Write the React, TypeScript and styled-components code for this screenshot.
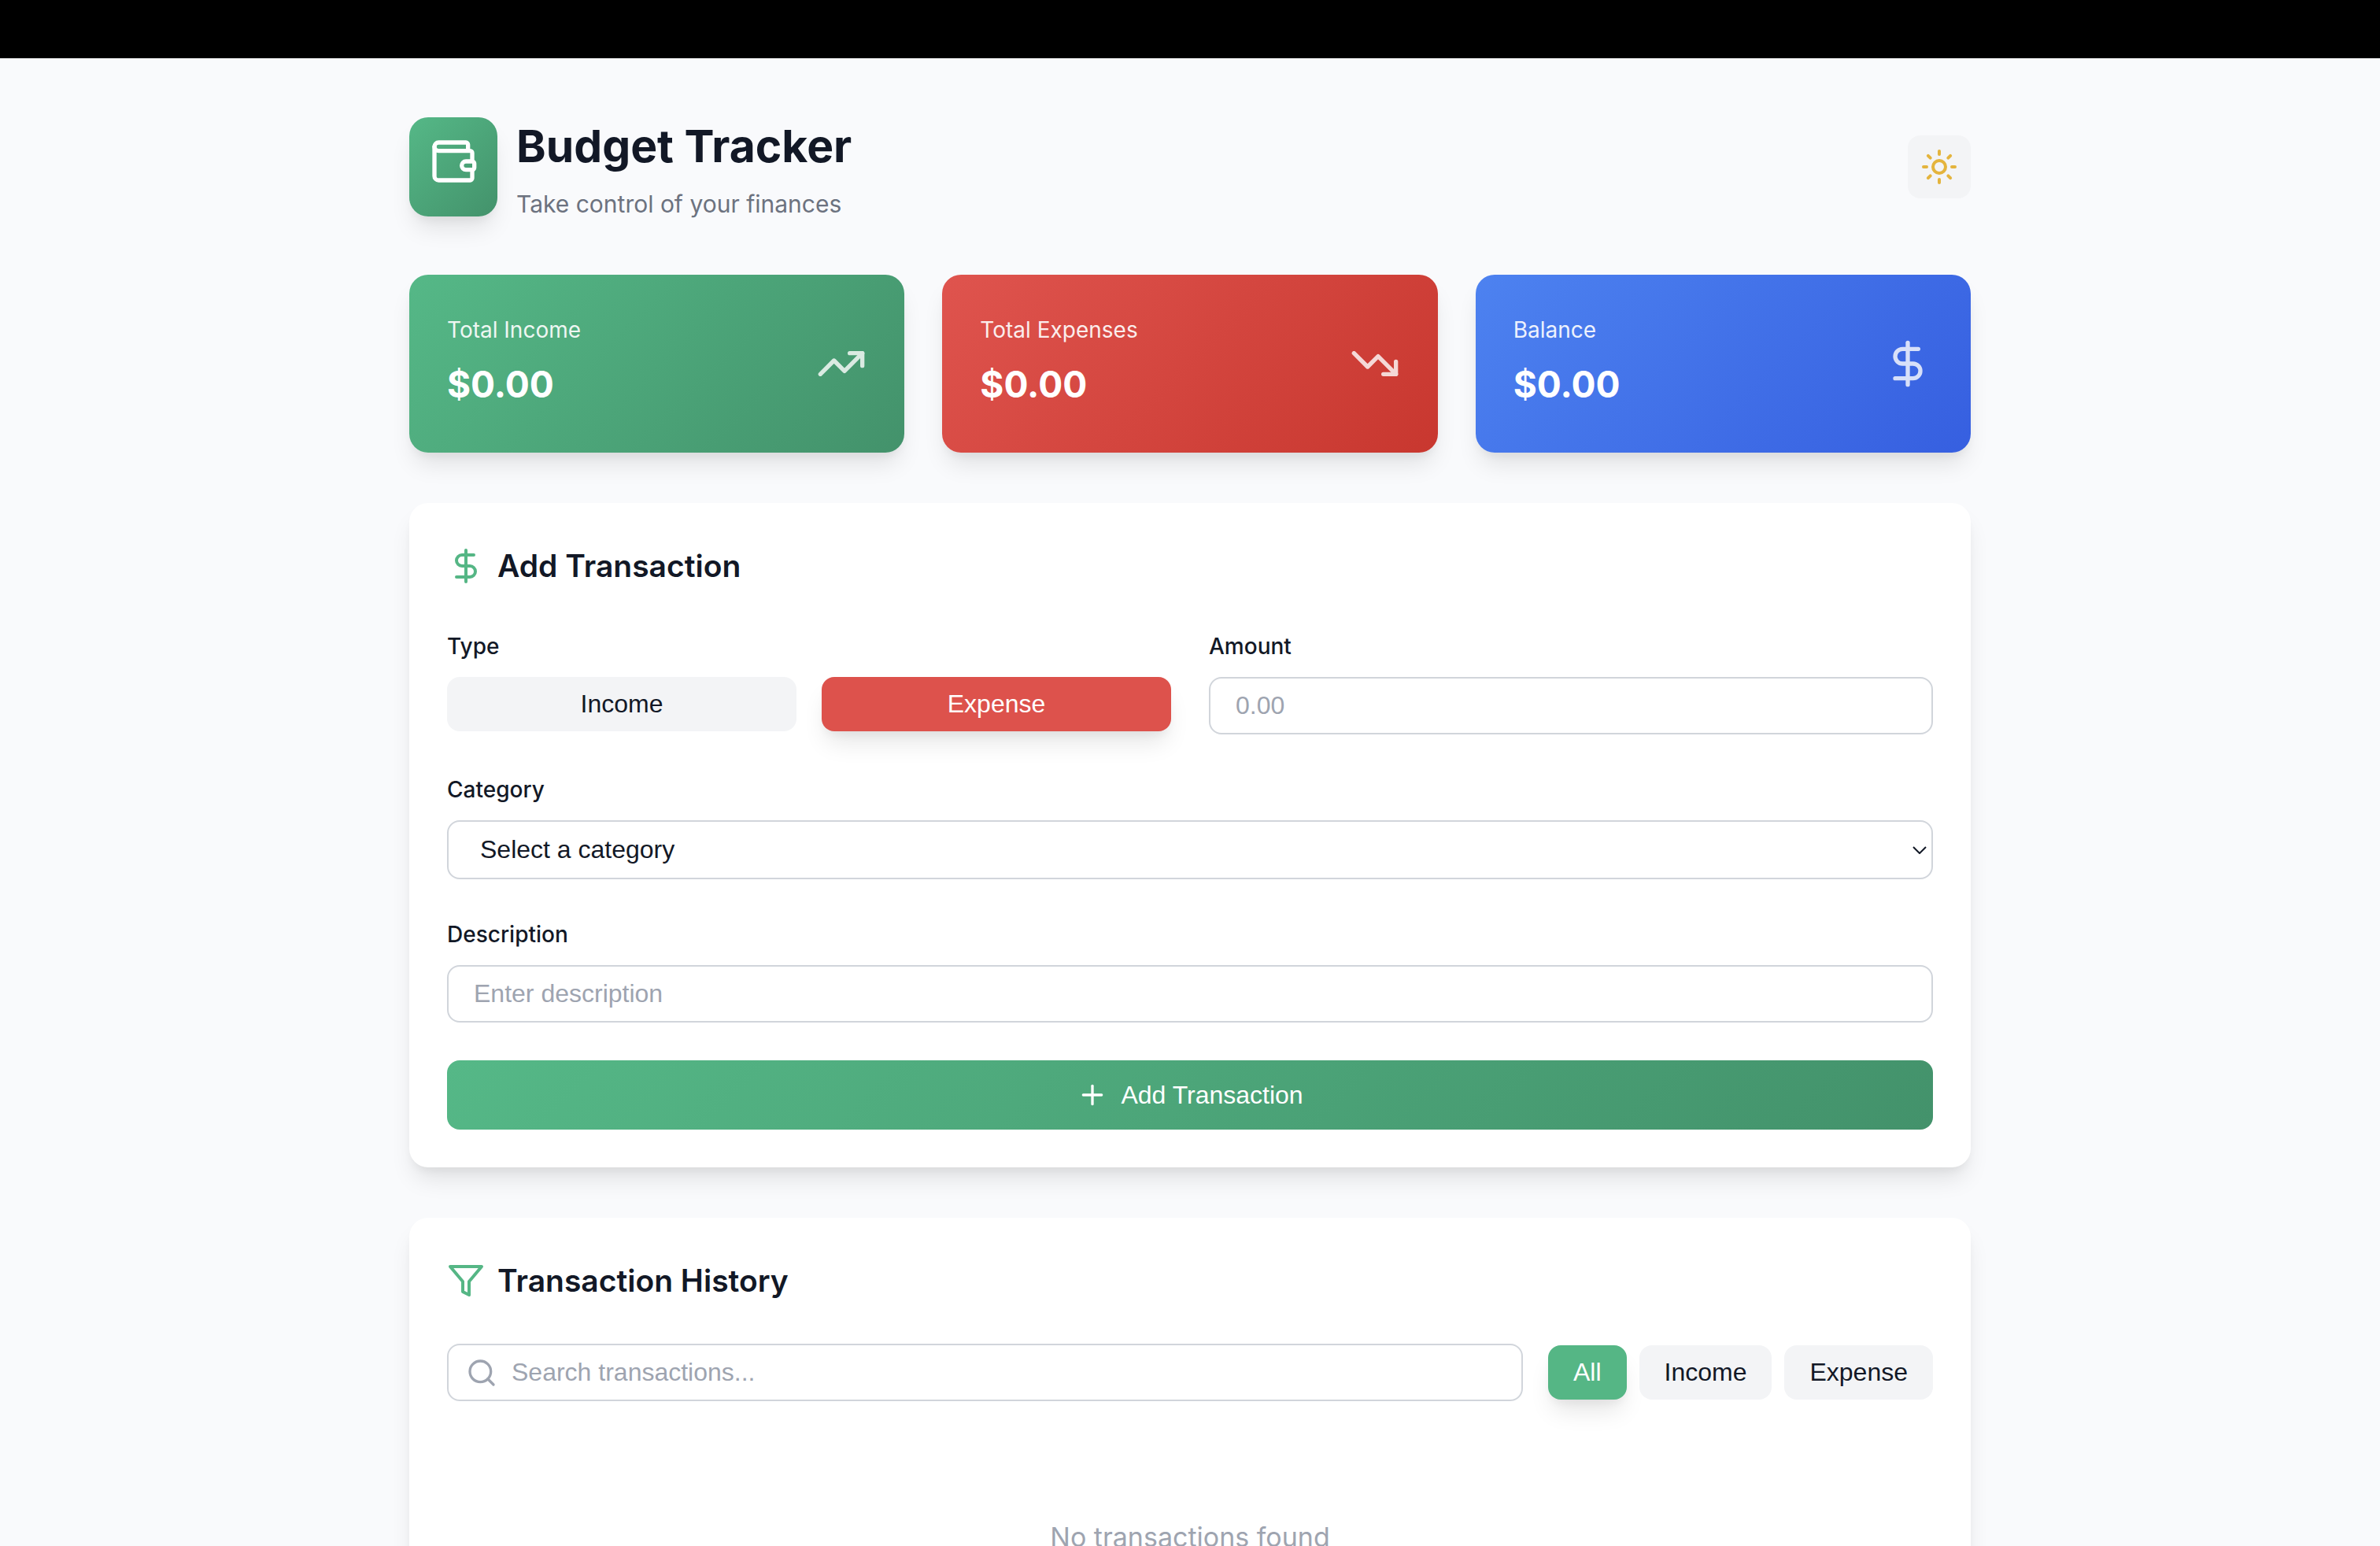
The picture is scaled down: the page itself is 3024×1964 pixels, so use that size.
import React, { useState } from "react";
import styled, { createGlobalStyle } from "styled-components";
import { Wallet, Sun, TrendingUp, TrendingDown, DollarSign, Plus, Search } from "lucide-react";

const GlobalStyle = createGlobalStyle`
  *, *::before, *::after { box-sizing: border-box; }
  body {
    margin: 0;
    min-height: 100vh;
    background: #f9fafc;
    color: #121826;
    font-family: Inter, "Liberation Sans", sans-serif;
    font-size: 32px;
    line-height: 1.6;
  }
  html { scrollbar-width: none; }
  h1, h2, p { margin: 0; }
  svg { flex-shrink: 0; }
`;

const green = "#55b685";
const red = "#dd524c";
const greenGradient = "linear-gradient(135deg, #55b887 0%, #43926b 100%)";
const redGradient = "linear-gradient(135deg, #df544e 0%, #c8372f 100%)";
const blueGradient = "linear-gradient(135deg, #4d82f0 0%, #365fe0 100%)";
const shadow = "0 20px 30px -6px rgba(0, 0, 0, 0.1), 0 8px 12px -4px rgba(0, 0, 0, 0.05)";

const TopBar = styled.div`
  height: 74px;
  background: #000;
`;

const Page = styled.main`
  max-width: 2048px;
  margin: 0 auto;
  padding: 64px 32px;
`;

const Header = styled.header`
  display: flex;
  align-items: center;
  justify-content: space-between;
  margin-bottom: 64px;
`;

const Brand = styled.div`
  display: flex;
  align-items: center;
  gap: 24px;
`;

const LogoTile = styled.div`
  width: 112px;
  height: 126px;
  padding: 24px;
  border-radius: 24px;
  background: ${greenGradient};
  color: #fff;
  box-shadow: ${shadow};
`;

const Title = styled.h1`
  font-size: 57px;
  font-weight: 700;
  line-height: 96px;
`;

const Subtitle = styled.p`
  color: #6c727f;
  font-size: 30px;
  line-height: 51px;
`;

const ThemeButton = styled.button`
  display: flex;
  padding: 16px;
  border: 0;
  border-radius: 16px;
  background: #f3f4f6;
  color: #e4b43d;
  cursor: pointer;
`;

const Summary = styled.section`
  display: grid;
  grid-template-columns: repeat(3, 1fr);
  gap: 48px;
  margin-bottom: 64px;
`;

const SummaryCard = styled.article<{ $fill: string }>`
  display: flex;
  align-items: center;
  justify-content: space-between;
  padding: 48px;
  border-radius: 24px;
  background: ${(p) => p.$fill};
  color: #fff;
  box-shadow: ${shadow};

  svg { opacity: 0.8; }
`;

const SummaryLabel = styled.p`
  margin-bottom: 8px;
  font-size: 28px;
  line-height: 45px;
  opacity: 0.9;
`;

const SummaryValue = styled.p`
  font-size: 46px;
  font-weight: 700;
  line-height: 77px;
`;

const Panel = styled.section`
  margin-bottom: 64px;
  padding: 48px;
  border-radius: 24px;
  background: #fff;
  box-shadow: ${shadow};
`;

const PanelHeading = styled.div`
  display: flex;
  align-items: center;
  gap: 16px;
  margin-bottom: 48px;

  svg { color: ${green}; }
`;

const PanelTitle = styled.h2`
  font-size: 39px;
  font-weight: 600;
  line-height: 64px;
`;

const Form = styled.form`
  display: flex;
  flex-direction: column;
  gap: 48px;
`;

const FormRow = styled.div`
  display: grid;
  grid-template-columns: 1fr 1fr;
  gap: 48px;
`;

const Field = styled.div`
  display: flex;
  flex-direction: column;
  gap: 16px;
`;

const Label = styled.label`
  font-size: 28px;
  font-weight: 500;
  line-height: 45px;
`;

const TypeOptions = styled.div`
  display: grid;
  grid-template-columns: 1fr 1fr;
  align-items: start;
  gap: 32px;
`;

const PillButton = styled.button<{ $active?: string }>`
  padding: 16px 32px;
  border: 0;
  border-radius: 16px;
  background: ${(p) => p.$active || "#f3f4f6"};
  color: ${(p) => (p.$active ? "#fff" : "#121826")};
  box-shadow: ${(p) => (p.$active ? shadow : "none")};
  font-family: "Liberation Sans", Arial, sans-serif;
  font-size: 32px;
  line-height: 37px;
  cursor: pointer;
`;

const Input = styled.input<{ $icon?: boolean }>`
  width: 100%;
  height: 73px;
  padding: 16px 32px 16px ${(p) => (p.$icon ? 80 : 32)}px;
  border: 2px solid #d1d5db;
  border-radius: 16px;
  background: #fff;
  color: #121826;
  font-family: "Liberation Sans", Arial, sans-serif;
  font-size: 32px;

  &::placeholder { color: #9ea4b0; opacity: 1; }
`;

const SelectBox = styled.div`
  display: grid;
  align-items: center;

  > * { grid-area: 1 / 1; }
  svg { justify-self: end; margin-right: 8px; pointer-events: none; }
`;

const Select = styled.select`
  appearance: none;
  width: 100%;
  height: 75px;
  padding: 0 40px 2px;
  border: 2px solid #d1d5db;
  border-radius: 16px;
  background: #fff;
  color: #121826;
  font-family: "Liberation Sans", Arial, sans-serif;
  font-size: 32px;
`;

const SubmitButton = styled.button`
  display: flex;
  align-items: center;
  justify-content: center;
  gap: 16px;
  padding: 24px;
  border: 0;
  border-radius: 16px;
  background: ${greenGradient};
  color: #fff;
  font-family: "Liberation Sans", Arial, sans-serif;
  font-size: 32px;
  line-height: 40px;
  cursor: pointer;
`;

const Filters = styled.div`
  display: flex;
  align-items: center;
  gap: 32px;
`;

const SearchBox = styled.div`
  position: relative;
  flex: 1;
  display: flex;

  svg {
    position: absolute;
    left: 24px;
    top: 50%;
    transform: translateY(-50%);
    color: #9ea4b0;
    pointer-events: none;
  }
`;

const FilterGroup = styled.div`
  display: flex;
  gap: 16px;
`;

const Empty = styled.p`
  padding: 144px 0 96px;
  color: #9ea4b0;
  font-size: 34px;
  line-height: 58px;
  text-align: center;
`;

const FunnelIcon = () => (
  <svg width="48" height="48" viewBox="0 0 24 24" fill="none" stroke="currentColor" strokeWidth="2" strokeLinecap="round" strokeLinejoin="round" aria-hidden="true">
    <polygon points="22 3 2 3 10 12.46 10 19 14 21 14 12.46 22 3" />
  </svg>
);

const ChevronIcon = () => (
  <svg width="18" height="10" viewBox="0 0 18 10" fill="none" stroke="#121826" strokeWidth="2" aria-hidden="true">
    <path d="M1 1l8 8 8-8" />
  </svg>
);

const summaries = [
  { label: "Total Income", fill: greenGradient, Icon: TrendingUp },
  { label: "Total Expenses", fill: redGradient, Icon: TrendingDown },
  { label: "Balance", fill: blueGradient, Icon: DollarSign },
];

export default function App() {
  const [type, setType] = useState("Expense");
  const [filter, setFilter] = useState("All");

  return (
    <>
      <GlobalStyle />
      <TopBar />
      <Page>
        <Header>
          <Brand>
            <LogoTile><Wallet size={64} /></LogoTile>
            <div>
              <Title>Budget Tracker</Title>
              <Subtitle>Take control of your finances</Subtitle>
            </div>
          </Brand>
          <ThemeButton type="button" aria-label="Toggle theme"><Sun size={48} /></ThemeButton>
        </Header>

        <Summary>
          {summaries.map(({ label, fill, Icon }) => (
            <SummaryCard key={label} $fill={fill}>
              <div>
                <SummaryLabel>{label}</SummaryLabel>
                <SummaryValue>$0.00</SummaryValue>
              </div>
              <Icon size={64} />
            </SummaryCard>
          ))}
        </Summary>

        <Panel>
          <PanelHeading>
            <DollarSign size={48} />
            <PanelTitle>Add Transaction</PanelTitle>
          </PanelHeading>
          <Form onSubmit={(e) => e.preventDefault()}>
            <FormRow>
              <Field role="group" aria-labelledby="type-label">
                <Label as="span" id="type-label">Type</Label>
                <TypeOptions>
                  {["Income", "Expense"].map((name) => (
                    <PillButton
                      key={name}
                      type="button"
                      aria-pressed={type === name}
                      $active={type === name ? (name === "Income" ? green : red) : undefined}
                      onClick={() => setType(name)}
                    >
                      {name}
                    </PillButton>
                  ))}
                </TypeOptions>
              </Field>
              <Field>
                <Label htmlFor="amount">Amount</Label>
                <Input id="amount" type="number" step="0.01" placeholder="0.00" />
              </Field>
            </FormRow>
            <Field>
              <Label htmlFor="category">Category</Label>
              <SelectBox>
                <Select id="category" defaultValue="">
                  <option value="">Select a category</option>
                </Select>
                <ChevronIcon />
              </SelectBox>
            </Field>
            <Field>
              <Label htmlFor="description">Description</Label>
              <Input id="description" type="text" placeholder="Enter description" />
            </Field>
            <SubmitButton type="submit">
              <Plus size={40} />
              Add Transaction
            </SubmitButton>
          </Form>
        </Panel>

        <Panel>
          <PanelHeading>
            <FunnelIcon />
            <PanelTitle>Transaction History</PanelTitle>
          </PanelHeading>
          <Filters>
            <SearchBox>
              <Search size={40} />
              <Input $icon type="text" aria-label="Search transactions" placeholder="Search transactions..." />
            </SearchBox>
            <FilterGroup>
              {["All", "Income", "Expense"].map((name) => (
                <PillButton
                  key={name}
                  type="button"
                  aria-pressed={filter === name}
                  $active={filter === name ? green : undefined}
                  onClick={() => setFilter(name)}
                >
                  {name}
                </PillButton>
              ))}
            </FilterGroup>
          </Filters>
          <Empty>No transactions found</Empty>
        </Panel>
      </Page>
    </>
  );
}
